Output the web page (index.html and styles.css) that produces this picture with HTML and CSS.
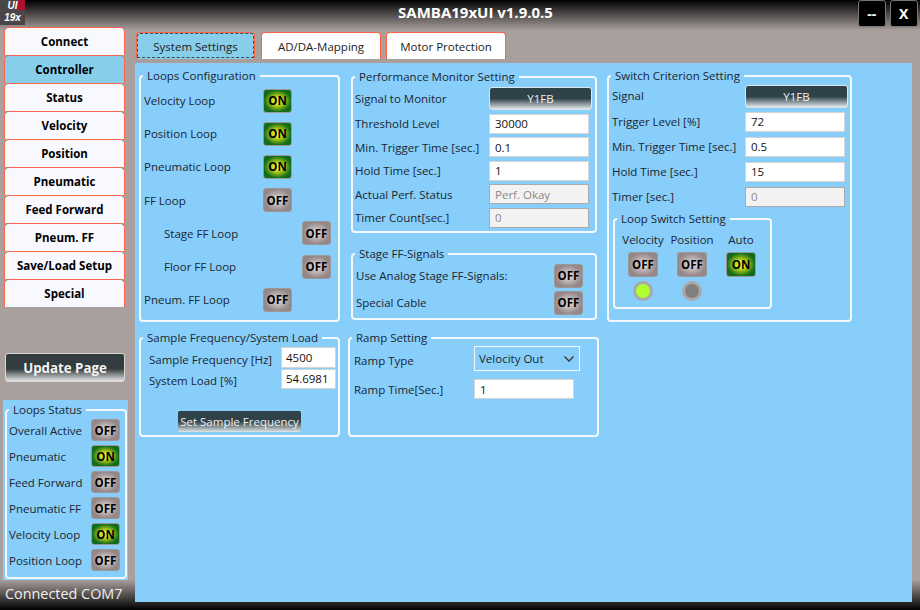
FILE: index.html
```html
<!DOCTYPE html>
<html lang="en">
<head>
    <meta charset="UTF-8">
    <title>SAMBA19xUI</title>
    <link rel="stylesheet" href="styles.css">
</head>
<body>
<div class="window">

    <div class="titlebar">
        <div class="logo"><span>UI</span><span>19x</span></div>
        <div class="title">SAMBA19xUI v1.9.0.5</div>
        <div class="winbtns">
            <button class="winbtn">--</button>
            <button class="winbtn">X</button>
        </div>
    </div>

    <div class="sidebar">
        <div class="nav">
            <button class="navbtn">Connect</button>
            <button class="navbtn active">Controller</button>
            <button class="navbtn">Status</button>
            <button class="navbtn">Velocity</button>
            <button class="navbtn">Position</button>
            <button class="navbtn">Pneumatic</button>
            <button class="navbtn">Feed Forward</button>
            <button class="navbtn">Pneum. FF</button>
            <button class="navbtn">Save/Load Setup</button>
            <button class="navbtn">Special</button>
        </div>
        <button class="update">Update Page</button>
        <div class="status-panel">
            <fieldset class="group status-group">
                <legend>Loops Status</legend>
                <div class="status-row"><span>Overall Active</span><button class="toggle small">OFF</button></div>
                <div class="status-row"><span>Pneumatic</span><button class="toggle small on">ON</button></div>
                <div class="status-row"><span>Feed Forward</span><button class="toggle small">OFF</button></div>
                <div class="status-row"><span>Pneumatic FF</span><button class="toggle small">OFF</button></div>
                <div class="status-row"><span>Velocity Loop</span><button class="toggle small on">ON</button></div>
                <div class="status-row"><span>Position Loop</span><button class="toggle small">OFF</button></div>
            </fieldset>
        </div>
        <div class="connected">Connected COM7</div>
    </div>

    <div class="content">
        <div class="tabs">
            <button class="tab active"><span>System Settings</span></button>
            <button class="tab"><span>AD/DA-Mapping</span></button>
            <button class="tab"><span>Motor Protection</span></button>
        </div>

        <div class="panel">
            <fieldset class="group loops">
                <legend>Loops Configuration</legend>
                <div class="loop-row"><span class="loop-label">Velocity Loop</span><button class="toggle on">ON</button></div>
                <div class="loop-row"><span class="loop-label">Position Loop</span><button class="toggle on">ON</button></div>
                <div class="loop-row"><span class="loop-label">Pneumatic Loop</span><button class="toggle on">ON</button></div>
                <div class="loop-row"><span class="loop-label">FF Loop</span><button class="toggle">OFF</button></div>
                <div class="loop-row sub"><span class="loop-label">Stage FF Loop</span><button class="toggle">OFF</button></div>
                <div class="loop-row sub"><span class="loop-label">Floor FF Loop</span><button class="toggle">OFF</button></div>
                <div class="loop-row"><span class="loop-label">Pneum. FF Loop</span><button class="toggle">OFF</button></div>
            </fieldset>

            <div class="middle">
                <fieldset class="group perf">
                    <legend>Performance Monitor Setting</legend>
                    <div class="form perf-form">
                        <span>Signal to Monitor</span><button class="dark signal">Y1FB</button>
                        <span>Threshold Level</span><input value="30000">
                        <span>Min. Trigger Time [sec.]</span><input value="0.1">
                        <span>Hold Time [sec.]</span><input value="1">
                        <span>Actual Perf. Status</span><input value="Perf. Okay" disabled>
                        <span>Timer Count[sec.]</span><input value="0" disabled>
                    </div>
                </fieldset>
                <fieldset class="group stage">
                    <legend>Stage FF-Signals</legend>
                    <div class="stage-row"><span>Use Analog Stage FF-Signals:</span><button class="toggle">OFF</button></div>
                    <div class="stage-row"><span>Special Cable</span><button class="toggle">OFF</button></div>
                </fieldset>
            </div>

            <fieldset class="group switch">
                <legend>Switch Criterion Setting</legend>
                <div class="form switch-form">
                    <span>Signal</span><button class="dark signal">Y1FB</button>
                    <span>Trigger Level [%]</span><input value="72">
                    <span>Min. Trigger Time [sec.]</span><input value="0.5">
                    <span>Hold Time [sec.]</span><input value="15">
                    <span>Timer [sec.]</span><input value="0" disabled>
                </div>
                <fieldset class="group loopswitch">
                    <legend>Loop Switch Setting</legend>
                    <div class="switch-cols">
                        <div class="switch-col"><span>Velocity</span><button class="toggle tall">OFF</button><div class="led lit"></div></div>
                        <div class="switch-col"><span>Position</span><button class="toggle tall">OFF</button><div class="led"></div></div>
                        <div class="switch-col"><span>Auto</span><button class="toggle tall on">ON</button></div>
                    </div>
                </fieldset>
            </fieldset>

            <fieldset class="group sample">
                <legend>Sample Frequency/System Load</legend>
                <div class="form sample-form">
                    <span>Sample Frequency [Hz]</span><input value="4500">
                    <span>System Load [%]</span><input value="54.6981">
                </div>
                <button class="dark setfreq">Set Sample Frequency</button>
            </fieldset>

            <fieldset class="group ramp">
                <legend>Ramp Setting</legend>
                <div class="form ramp-form">
                    <span class="ramp-type">Ramp Type</span>
                    <div class="select">Velocity Out
                        <svg width="12" height="8" viewBox="0 0 12 8"><path d="M1.5 1.5 L6 6 L10.5 1.5" fill="none" stroke="#333" stroke-width="1.3"/></svg>
                    </div>
                    <span>Ramp Time[Sec.]</span><input value="1">
                </div>
            </fieldset>
        </div>
    </div>

</div>
</body>
</html>
```

FILE: styles.css
```css
* {
    box-sizing: border-box;
}

body {
    margin: 0;
    font-family: "Open Sans", "Noto Sans", sans-serif;
    font-size: 11.5px;
    color: #1c2530;
}

button, input {
    font-family: inherit;
    font-size: inherit;
}

.window {
    width: 920px;
    height: 610px;
    overflow: hidden;
    display: grid;
    grid-template-columns: 135px 777px;
    grid-template-rows: 27px 583px;
    background: linear-gradient(to bottom, #000 0, #a9a09e 5%, #a9a09e 95%, #000 100%);
}

/* title bar */
.titlebar {
    grid-column: 1 / 3;
    width: 920px;
    display: flex;
    align-items: flex-start;
}

.logo {
    width: 25px;
    height: 25px;
    display: flex;
    flex-direction: column;
    align-items: center;
    background: linear-gradient(#b01030, #b01030) no-repeat right top / 7px 10px, #4a4648;
    color: #fff;
    font-family: "Liberation Sans", sans-serif;
    font-size: 10px;
    font-weight: bold;
    font-style: italic;
    line-height: 12px;
}

.title {
    flex: 1;
    text-align: center;
    color: #fff;
    font-weight: bold;
    font-size: 15px;
    line-height: 24px;
    padding-left: 68px;
}

.winbtns {
    display: flex;
    gap: 4.5px;
    padding-right: 2.5px;
}

.winbtn {
    width: 27.5px;
    height: 27px;
    background: #000;
    color: #fff;
    border: 1px solid #777;
    border-radius: 3px;
    font-weight: bold;
    font-size: 14px;
    padding: 0;
}

/* sidebar */
.sidebar {
    display: flex;
    flex-direction: column;
}

.nav {
    display: flex;
    flex-direction: column;
    margin-left: 4px;
    width: 121px;
}

.navbtn {
    height: 28px;
    background: #f8f8ff;
    color: #000;
    border: 1px solid #ff6347;
    border-bottom: none;
    border-radius: 5px 5px 0 0;
    font-weight: bold;
    font-size: 11.5px;
    padding: 0;
}

.navbtn.active {
    background: #87ceeb;
}

.update {
    margin: 46px 0 0 5px;
    width: 120px;
    height: 29px;
    color: #f4f4f4;
    border: 1px solid #d8d8d8;
    border-radius: 3px;
    background: linear-gradient(to bottom, #333c3e 0, #333c3e 55%, #e4e4e4 100%);
    font-weight: bold;
    font-size: 13.3px;
    padding: 0;
}

.status-panel {
    margin: 18px 0 0 3px;
    width: 125px;
    height: 180px;
    background: #87cefa;
    padding: 2px 1px 0 2px;
}

.connected {
    margin: 4px 0 0 5px;
    color: #eee;
    font-size: 14.4px;
    line-height: 20px;
}

/* group boxes */
.group {
    margin: 0;
    padding: 0;
    min-width: 0;
    border: 2px solid #f2f8fd;
    border-radius: 4px;
}

.group legend {
    margin-left: 2px;
    padding: 0 4px;
    line-height: 16px;
    font-size: 11.5px;
}

.status-group {
    height: 177px;
}

.status-group legend {
    margin-bottom: -1px;
}

.status-row {
    height: 26px;
    display: flex;
    align-items: center;
    justify-content: space-between;
    padding: 0 5px 0 2px;
}

/* toggles */
.toggle {
    flex: none;
    width: 29px;
    height: 24px;
    padding: 0;
    border: 1px solid #999;
    border-radius: 3px;
    color: #000;
    font-weight: bold;
    font-size: 11.5px;
    background: radial-gradient(ellipse closest-side, #d6cfd0 20%, #958788 100%);
}

.toggle.on {
    background: radial-gradient(ellipse closest-side, #e4ee20 25%, #a4c416 50%, #136c1c 100%);
}

.toggle.small {
    height: 22px;
}

.toggle.tall {
    width: 30px;
    height: 25px;
}

/* main area */
.content {
    display: flex;
    flex-direction: column;
    height: 575px;
}

.tabs {
    display: flex;
    gap: 5px;
    margin: 5px 0 4px 1px;
    height: 27px;
}

.tab {
    width: 120px;
    height: 27px;
    padding: 0;
    background: #fff;
    color: #222;
    border: 1px solid #ff6347;
    border-bottom: none;
    border-radius: 4px 4px 0 0;
}

.tab.active {
    width: 119px;
    margin-right: 1px;
    background: #87ceeb;
    outline: 1px dashed #33505c;
    outline-offset: -2px;
}

.panel {
    flex: 1;
    background: #87cefa;
    padding: 5px 0 0 4px;
    display: grid;
    grid-template-columns: 202px 246px 245px;
    grid-template-rows: 254px 107px;
    column-gap: 10px;
    row-gap: 8px;
    align-items: start;
}

.loops {
    width: 201px;
    height: 254px;
}

.loop-row {
    height: 33.2px;
    display: flex;
    align-items: center;
    padding-left: 3px;
}

.loop-label {
    width: 119px;
}

.loop-row.sub {
    padding-left: 23px;
}

.loop-row.sub .loop-label {
    width: 138px;
}

.middle {
    display: flex;
    flex-direction: column;
    gap: 13px;
    padding-top: 1px;
}

.form {
    display: grid;
    align-items: center;
}

.form input {
    height: 20px;
    width: 100px;
    padding: 0 0 0 5px;
    border: 1px solid #d4d4d4;
    background: #fff;
    color: #111;
}

.form input:disabled {
    background: #f2f2f2;
    color: #8a8a8a;
    border-color: #aaa;
}

.dark {
    color: #f0f0f0;
    border: 1px solid #dbe6ee;
    border-radius: 3px;
    background: linear-gradient(to bottom, #2f4249 0, #2f4249 50%, #dfe6e8 100%);
    padding: 0;
}

.signal {
    height: 23px;
    width: 103px;
}

.perf {
    height: 164px;
}

.perf-form {
    grid-template-columns: 134px 100px;
    row-gap: 3.5px;
    padding: 2px 0 0 2px;
}

.stage {
    height: 74px;
}

.stage-row {
    height: 27px;
    display: flex;
    align-items: center;
    justify-content: space-between;
    padding: 0 12px 0 3px;
}

.switch {
    height: 254px;
}

.switch-form {
    grid-template-columns: 133px 100px;
    row-gap: 5px;
    padding: 1px 0 0 3px;
}

.switch-form .signal {
    margin-bottom: -1.3px;
}

.loopswitch {
    margin: 4px 0 0 4px;
    width: 159px;
    height: 98px;
}

.switch-cols {
    display: flex;
    padding: 5px 0 0 7px;
    gap: 7px;
}

.switch-col {
    width: 42px;
    display: flex;
    flex-direction: column;
    align-items: center;
    gap: 5px;
}

.led {
    width: 20px;
    height: 20px;
    margin-top: -1px;
    border-radius: 50%;
    border: 3px solid #a9a9a9;
    background: #808080;
}

.led.lit {
    background: #adff2f;
}

.sample {
    width: 201px;
    height: 107px;
    display: flex;
    flex-direction: column;
}

.sample-form {
    grid-template-columns: 132px 55px;
    row-gap: 1px;
    padding: 1px 0 0 8px;
}

.sample-form span {
    padding-top: 4px;
}

.sample-form input {
    width: 55px;
    height: 20.5px;
    padding-left: 4px;
}

.setfreq {
    display: block;
    margin: 22px 0 0 37px;
    width: 123px;
    height: 21px;
    border: none;
    border-radius: 2px;
    font-size: 11.5px;
    white-space: nowrap;
}

.ramp {
    margin-left: -3px;
    width: 251px;
    height: 107px;
}

.ramp-form {
    grid-template-columns: 120px 106px;
    grid-template-rows: 25px 20px;
    row-gap: 8px;
    padding-left: 4px;
}

.ramp-type {
    padding-top: 3px;
}

.select {
    height: 25px;
    border: 1px solid #f2f8fd;
    display: flex;
    align-items: center;
    justify-content: space-between;
    padding: 0 4px;
}
```
